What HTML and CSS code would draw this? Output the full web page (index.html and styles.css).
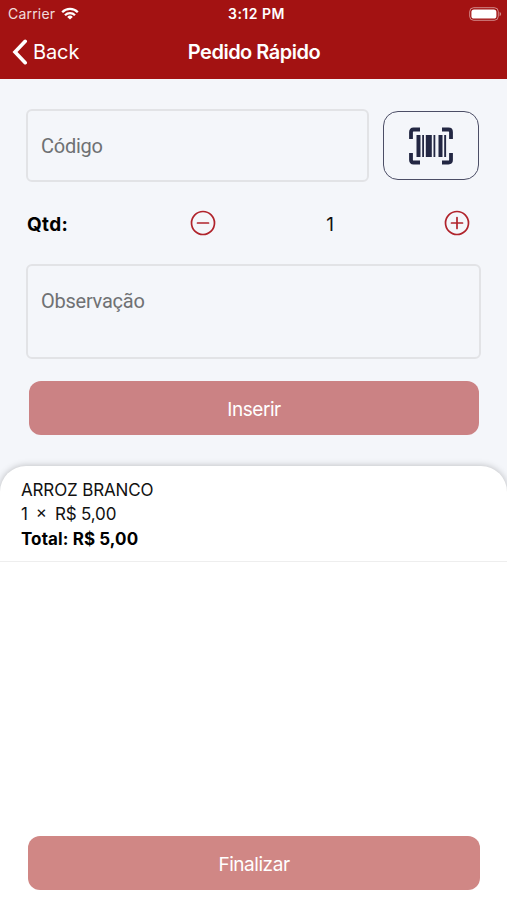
FILE: index.html
```html
<!doctype html>
<html lang="pt-BR">
<head>
    <meta charset="utf-8">
    <meta name="viewport" content="width=device-width, initial-scale=1">
    <title>Pedido Rápido</title>
    <link rel="stylesheet" href="styles.css">
</head>

<body>
<div class="app">
    <header class="header">
        <div class="status-bar">
            <div class="status-left">
                <span class="carrier">Carrier</span>
                <svg class="wifi" viewBox="0 0 18 13" width="18" height="13" fill="none" stroke="#fff" stroke-width="2.3">
                    <path d="M1.2 5.2a11 11 0 0 1 15.6 0"/>
                    <path d="M4 8.2a7 7 0 0 1 10 0"/>
                    <path d="M9 12.6L6.2 9.9a4 4 0 0 1 5.600 0z" fill="#fff" stroke="none"/>
                </svg>
            </div>
            <span class="clock">3:12 PM</span>
            <div class="status-right">
                <svg class="battery" viewBox="0 0 33 14" width="33" height="14">
                    <rect x="0.7" y="0.7" width="28.6" height="12.6" rx="4" fill="none" stroke="#fff" stroke-opacity="0.5"/>
                    <rect x="2.4" y="2.4" width="25" height="9.2" rx="2.6" fill="#fff"/>
                    <path d="M30.6 5v4.2q1.5-.6 1.5-2.1T30.6 5z" fill="#fff" fill-opacity="0.5"/>
                </svg>
            </div>
        </div>
        <nav class="nav-bar">
            <a class="back" href="#">
                <svg viewBox="0 0 16 26" width="16" height="26" fill="none" stroke="#fff" stroke-width="3.6" stroke-linecap="round" stroke-linejoin="miter">
                    <path d="M13.2 2.3L3 13l10.2 10.7"/>
                </svg>
                <span class="back-label">Back</span>
            </a>
            <h1 class="title">Pedido Rápido</h1>
        </nav>
    </header>

    <main class="form">
        <div class="code-row">
            <div class="field field-code"><span class="placeholder">Código</span></div>
            <button class="scan-btn" type="button" aria-label="Ler código de barras">
                <svg viewBox="0 0 46 38" width="46" height="38">
                    <path d="M3 12V5q0-2.500 2.500-2.500H12M34 2.500h6.500Q43 2.500 43 5v7M43 26v7q0 2.500-2.500 2.500H34M12 35.500H5.500Q3 35.500 3 33v-7" fill="none" stroke="#232743" stroke-width="3.800"/>
                    <g fill="#232743">
                        <rect x="8.500" y="8" width="4" height="22"/>
                        <rect x="14.200" y="8" width="1.800" height="22"/>
                        <rect x="17.800" y="8" width="6" height="22"/>
                        <rect x="25.500" y="8" width="1.800" height="22"/>
                        <rect x="30.500" y="8" width="4" height="22"/>
                        <rect x="36.200" y="8" width="1.900" height="22"/>
                    </g>
                </svg>
            </button>
        </div>

        <div class="qty-row">
            <span class="qty-label">Qtd:</span>
            <div class="stepper">
                <button class="step-btn" type="button" aria-label="Diminuir">
                    <svg viewBox="0 0 26 26" width="26" height="26" fill="none" stroke="#b0232b" stroke-width="1.700" stroke-linecap="round">
                        <circle cx="13" cy="13" r="11.500"/>
                        <path d="M7.500 13h11"/>
                    </svg>
                </button>
                <span class="qty-value">1</span>
                <button class="step-btn" type="button" aria-label="Aumentar">
                    <svg viewBox="0 0 26 26" width="26" height="26" fill="none" stroke="#b0232b" stroke-width="1.700" stroke-linecap="round">
                        <circle cx="13" cy="13" r="11.500"/>
                        <path d="M7.500 13h11M13 7.500v11"/>
                    </svg>
                </button>
            </div>
        </div>

        <div class="field field-note"><span class="placeholder">Observação</span></div>
        <button class="btn btn-insert" type="button">Inserir</button>
    </main>

    <section class="sheet">
        <div class="item">
            <div class="item-name">ARROZ BRANCO</div>
            <div class="item-price"><span>1</span><span class="times">×</span><span>R$ 5,00</span></div>
            <div class="item-total">Total: R$ 5,00</div>
        </div>
        <button class="btn btn-finish" type="button">Finalizar</button>
    </section>
</div>
</body>
</html>
```

FILE: styles.css
```css
* {
    box-sizing: border-box;
}

body {
    margin: 0;
    font-family: Inter, "Liberation Sans", sans-serif;
    color: #111;
    background-color: #f4f6fa;
}

button {
    font-family: inherit;
    padding: 0;
    cursor: pointer;
}

svg {
    display: block;
}

.app {
    display: flex;
    flex-direction: column;
    height: 900px;
    overflow: hidden;
}

/* Header */
.header {
    height: 79px;
    background-color: #a31212;
    color: #fff;
}

.status-bar {
    display: grid;
    grid-template-columns: 1fr auto 1fr;
    align-items: center;
    height: 27px;
    padding: 0 5px 0 8px;
}

.status-left {
    display: flex;
    align-items: center;
    gap: 6px;
}

.carrier {
    font-size: 14px;
    letter-spacing: 0.2px;
    opacity: 0.85;
}

.clock {
    font-size: 14px;
    font-weight: 600;
    letter-spacing: 0.5px;
    padding-left: 3px;
}

.status-right {
    display: flex;
    justify-content: flex-end;
}

.nav-bar {
    display: grid;
    grid-template-columns: 1fr auto 1fr;
    align-items: center;
    height: 50px;
    padding: 0 12px;
}

.back {
    display: flex;
    align-items: center;
    gap: 5px;
    color: #fff;
    text-decoration: none;
}

.back-label {
    font-size: 20px;
    letter-spacing: -0.1px;
}

.title {
    margin: 0;
    padding-left: 1px;
    font-size: 20px;
    font-weight: 600;
    letter-spacing: -0.5px;
}

/* Form */
.form {
    display: flex;
    flex-direction: column;
    height: 387px;
    padding: 30px 26px 0;
}

.code-row {
    display: flex;
    align-items: center;
    gap: 14px;
}

.field {
    border: 2px solid #e2e3e6;
    border-radius: 6px;
    padding: 0 13px;
}

.field-code {
    display: flex;
    align-items: center;
    width: 343px;
    height: 73px;
}

.field-note {
    height: 95px;
    padding-top: 23px;
}

.placeholder {
    font-family: Roboto, sans-serif;
    font-size: 20px;
    line-height: 24px;
    letter-spacing: -0.25px;
    color: #6f7173;
}

.scan-btn {
    display: flex;
    align-items: center;
    justify-content: center;
    width: 96px;
    height: 69px;
    border: 1.5px solid #4c4e66;
    border-radius: 15px;
    background: transparent;
}

.qty-row {
    display: flex;
    align-items: center;
    height: 82px;
}

.qty-label {
    width: 164px;
    padding: 2px 0 0 1px;
    font-size: 19px;
    font-weight: 700;
    letter-spacing: 0.3px;
    color: #000;
}

.stepper {
    display: flex;
    align-items: center;
    justify-content: space-between;
    width: 280px;
}

.step-btn {
    border: 0;
    background: transparent;
}

.qty-value {
    padding-top: 2px;
    font-size: 19px;
}

/* Buttons */
.btn {
    height: 54px;
    border: 0;
    border-radius: 12px;
    color: #fff;
    font-size: 19px;
    letter-spacing: -0.45px;
}

.btn-insert {
    margin: 22px 2px 0 3px;
    padding-top: 2px;
    background-color: #cb8284;
}

/* Order list */
.sheet {
    display: flex;
    flex: 1;
    flex-direction: column;
    justify-content: space-between;
    background-color: #fff;
    border-radius: 26px 26px 0 0;
    box-shadow: 0 0 7px rgba(0, 0, 0, 0.25);
}

.item {
    height: 96px;
    padding: 12px 21px 0;
    border-bottom: 1px solid #eee;
    font-size: 17px;
    line-height: 24.300px;
    letter-spacing: -0.15px;
}

.item-price {
    display: flex;
}

.times {
    margin: -2px 8px 0;
}

.item-total {
    font-weight: 700;
    letter-spacing: 0.1px;
    color: #000;
}

.btn-finish {
    margin: 0 27px 10px 28px;
    padding-top: 2px;
    background-color: #d08785;
}
```
